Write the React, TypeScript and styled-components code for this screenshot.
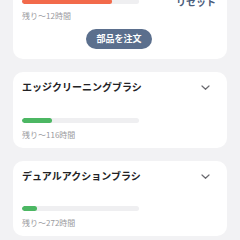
import React from "react";
import styled, { createGlobalStyle } from "styled-components";

const GlobalStyle = createGlobalStyle`
  html, body {
    margin: 0;
    padding: 0;
    background: #f2f2f4;
    font-family: "Noto Sans CJK JP", "Noto Sans", sans-serif;
    overflow: hidden;
  }
`;

const Page = styled.div`
  width: 240px;
  height: 240px;
  box-sizing: border-box;
  padding: 0 13px;
  display: flex;
  flex-direction: column;
  gap: 13px;
  overflow: hidden;
`;

const Card = styled.div`
  background: #ffffff;
  border-radius: 10px;
  box-sizing: border-box;
  padding: 8px 11px 8px 9px;
  display: flex;
  flex-direction: column;
  flex-shrink: 0;
`;

const ActiveCard = styled(Card)`
  padding: 21px 11px 10px 9px;
  margin-top: -22px;
`;

const TopRow = styled.div`
  display: flex;
  align-items: flex-start;
`;

const Gauge = styled.div`
  width: 117px;
  display: flex;
  flex-direction: column;
`;

const Track = styled.div<{ $gap?: number }>`
  width: 117px;
  height: 5px;
  border-radius: 3px;
  background: #efeff1;
  overflow: hidden;
  margin-top: ${(p) => (p.$gap ? `${p.$gap}px` : "0")};
`;

const Fill = styled.div<{ $color: string }>`
  height: 100%;
  border-radius: 3px;
  background: ${(p) => p.$color};
`;

const Remaining = styled.div`
  margin-top: 6px;
  font-size: 8px;
  line-height: 11px;
  color: #9a9a9e;
  white-space: nowrap;
`;

const ResetLink = styled.button`
  margin-left: auto;
  margin-top: -4px;
  padding: 0;
  border: none;
  background: none;
  font-family: inherit;
  font-size: 10px;
  line-height: 14px;
  font-weight: 700;
  color: #4b5d7c;
`;

const OrderButton = styled.button`
  align-self: center;
  margin-top: 8px;
  height: 20px;
  width: 66px;
  padding: 0;
  border: none;
  border-radius: 10px;
  background: #5b6f8d;
  color: #ffffff;
  font-family: inherit;
  font-size: 9px;
  font-weight: 600;
  line-height: 20px;
`;

const Header = styled.div`
  display: flex;
  align-items: center;
  justify-content: space-between;
  height: 14px;
`;

const Title = styled.div`
  font-size: 10px;
  line-height: 14px;
  font-weight: 700;
  color: #222224;
  white-space: nowrap;
`;

const Chevron = styled.svg`
  width: 12px;
  height: 12px;
  margin-right: 5px;
  flex-shrink: 0;
`;

type Part = { name: string; pct: number; hours: string };

const parts: Part[] = [
  { name: "エッジクリーニングブラシ", pct: 26, hours: "残り～116時間" },
  { name: "デュアルアクションブラシ", pct: 13, hours: "残り～272時間" },
];

export default function App() {
  return (
    <>
      <GlobalStyle />
      <Page>
        <ActiveCard>
          <TopRow>
            <Gauge>
              <Track>
                <Fill $color="#f26a4b" style={{ width: "77%" }} />
              </Track>
              <Remaining>残り～12時間</Remaining>
            </Gauge>
            <ResetLink>リセット</ResetLink>
          </TopRow>
          <OrderButton>部品を注文</OrderButton>
        </ActiveCard>
        {parts.map((p) => (
          <Card key={p.name}>
            <Header>
              <Title>{p.name}</Title>
              <Chevron viewBox="0 0 12 12" fill="none">
                <path
                  d="M3 5 L6.5 8.3 L10 5"
                  stroke="#6b6b70"
                  strokeWidth="1.2"
                  strokeLinecap="round"
                  strokeLinejoin="round"
                />
              </Chevron>
            </Header>
            <Track $gap={23.5}>
              <Fill $color="#4cb763" style={{ width: `${p.pct}%` }} />
            </Track>
            <Remaining>{p.hours}</Remaining>
          </Card>
        ))}
      </Page>
    </>
  );
}
